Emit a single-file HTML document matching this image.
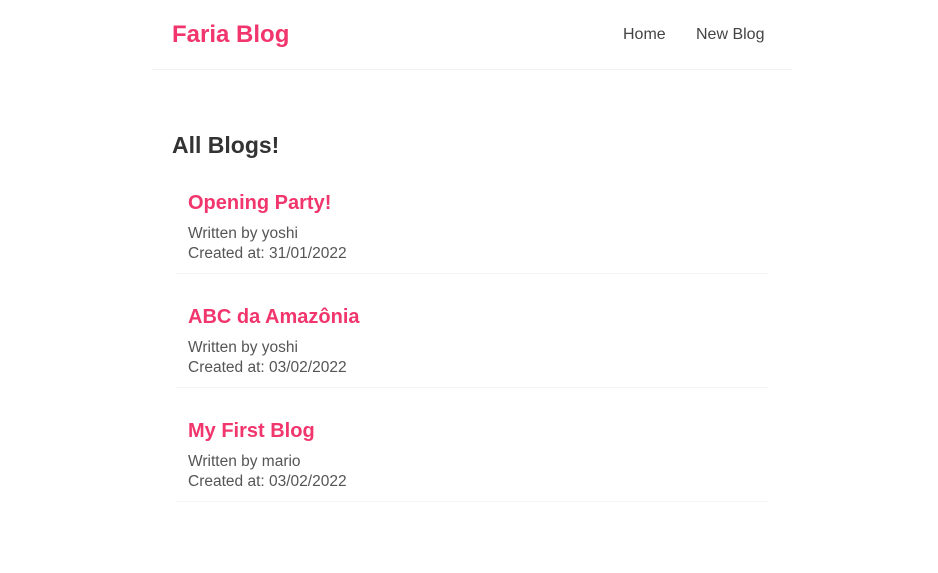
<!DOCTYPE html>
<html><head><meta charset="utf-8"><style>
*{margin:0;padding:0;box-sizing:border-box}
body{width:938px;height:573px;background:#fff;font-family:"Liberation Sans",sans-serif;color:#333;overflow:hidden}
.nav{position:absolute;left:152px;top:0;width:640px;height:70px;border-bottom:1px solid #f2f2f2}
.nav h1{position:absolute;left:20px;top:19px;font-size:24px;line-height:32px;color:#f1356d;font-weight:bold}
.nav a{position:absolute;top:25px;font-size:16px;line-height:20px;color:#444;text-decoration:none}
h2{position:absolute;left:172px;top:131px;font-size:23px;line-height:28px;font-weight:bold;color:#333}
.card{position:absolute;left:176px;width:592px;height:84px;border-bottom:1px solid #f4f4f4}
.card h3{position:absolute;left:12px;top:0;font-size:20px;line-height:26px;color:#f1356d;font-weight:bold}
.card p{position:absolute;left:12px;font-size:15.5px;line-height:20px;color:#555}
</style></head><body>
<div class="nav"><h1>Faria Blog</h1><a style="left:471px">Home</a><a style="left:544px">New Blog</a></div>
<h2>All Blogs!</h2>
<div class="card" style="top:190px"><h3>Opening Party!</h3><p style="top:34px">Written by yoshi</p><p style="top:54px">Created at: 31/01/2022</p></div>
<div class="card" style="top:304px"><h3>ABC da Amazônia</h3><p style="top:34px">Written by yoshi</p><p style="top:54px">Created at: 03/02/2022</p></div>
<div class="card" style="top:418px"><h3>My First Blog</h3><p style="top:34px">Written by mario</p><p style="top:54px">Created at: 03/02/2022</p></div>
</body></html>
